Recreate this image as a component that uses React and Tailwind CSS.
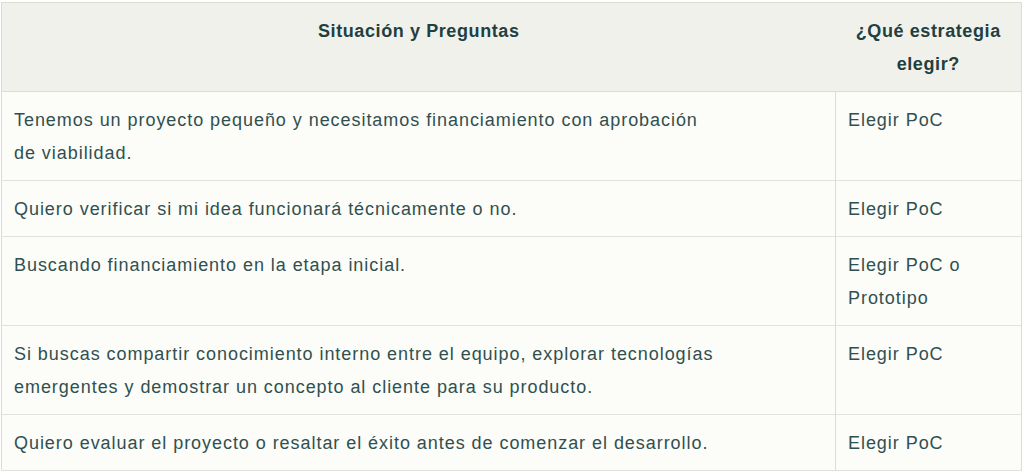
import React from 'react';

export default function App() {
  const rows = [
    { q: 'Tenemos un proyecto pequeño y necesitamos financiamiento con aprobación de viabilidad.', a: 'Elegir PoC' },
    { q: 'Quiero verificar si mi idea funcionará técnicamente o no.', a: 'Elegir PoC' },
    { q: 'Buscando financiamiento en la etapa inicial.', a: 'Elegir PoC o Prototipo' },
    { q: 'Si buscas compartir conocimiento interno entre el equipo, explorar tecnologías emergentes y demostrar un concepto al cliente para su producto.', a: 'Elegir PoC' },
    { q: 'Quiero evaluar el proyecto o resaltar el éxito antes de comenzar el desarrollo.', a: 'Elegir PoC' },
  ];

  return (
    <div className="min-h-screen bg-white pt-[2px] pl-[1px] font-['Liberation_Sans',Arial,sans-serif]">
      <table className="w-[1021px] border-collapse border border-[#dcdcd4] text-[18px] leading-[33px] tracking-[0.95px] text-[#30504f]">
        <thead>
          <tr className="bg-[#f1f1ec] border-b border-[#dcdcd4]">
            <th className="w-[834px] px-3 pt-[12px] pb-[10px] text-center align-top font-semibold tracking-[0.6px] text-[#223f40]">
              Situación y Preguntas
            </th>
            <th className="px-3 pt-[12px] pb-[10px] text-center align-top font-semibold tracking-[0.6px] text-[#223f40]">
              ¿Qué estrategia elegir?
            </th>
          </tr>
        </thead>
        <tbody className="bg-[#fcfcf9]">
          {rows.map((r, i) => (
            <tr key={i} className="border-b border-[#e2e2dc]">
              <td className="px-3 pt-[12px] pb-[10px] align-top">
                <div className="max-w-[704px]">{r.q}</div>
              </td>
              <td className="border-l border-[#dcdcd4] px-3 pt-[12px] pb-[10px] align-top">{r.a}</td>
            </tr>
          ))}
        </tbody>
      </table>
    </div>
  );
}
